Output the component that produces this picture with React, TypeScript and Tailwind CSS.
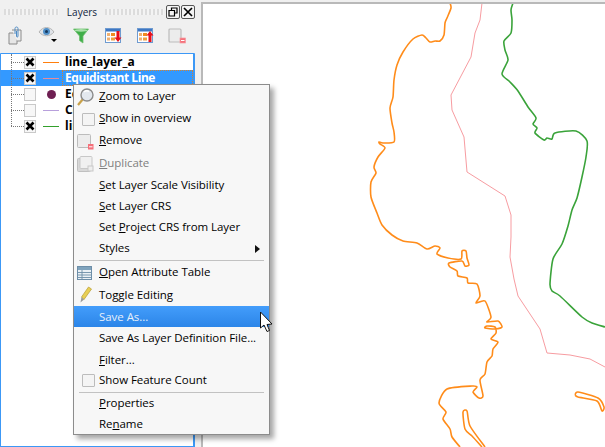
import React from "react";

const orange1 = "450,3 451,8 447,18 445,23 444,35 440,41 435,41 430,42 426,38 422,35 413,39 403,52 397,65 394,80 393,97 390,108 392,123 394,132 394,142 383,143 379,142 380,144 385,148 378,157 374,167 376,173 371,182 371,197 377,213 382,225 392,235 403,241 417,243 427,249 435,246 440,248 437,254 448,258 461,259 462,251 466,251 467,258 469,265 465,266 462,261 449,263 450,267 457,271 458,276 467,278 468,283 477,284 480,296 476,303 485,301 491,317 487,322 498,321 502,327 495,329 485,328 487,326 495,327 496,333 491,339 498,342 493,349 492,356 487,362 485,374 480,380 483,396 479,398 473,392 477,387 472,386 447,389 439,403 446,412 443,419 450,429 452,437 460,447";
const orange2 = "485,447 470,426 467,411 463,412 465,429 472,436 482,447";
const orange3 = "575,395 578,392 598,398 604,407 602,411 597,401 578,397 575,395";
const pink = "482,3 480,20 475,33 471,57 451,95 452,110 464,137 467,172 505,196 511,215 511,237 510,257 514,279 518,296 540,329 547,353 570,355 590,359 605,367";
const green = "513,3 511,10 512,20 511,33 504,41 505,50 508,60 502,74 510,82 518,91 528,107 536,118 533,124 537,128 535,133 544,140 547,138 552,139 555,133 576,131 587,141 586,157 582,177 577,198 572,210 568,226 562,244 553,259 550,284 552,291 560,296 582,317 592,323 605,327";

function smooth(points: string): string {
  const p = points.split(" ").map((s) => s.split(",").map(Number));
  let d = `M${p[0][0]} ${p[0][1]}`;
  const k = 0.12;
  for (let i = 0; i < p.length - 1; i++) {
    const a = p[Math.max(i - 1, 0)];
    const b = p[i];
    const c = p[i + 1];
    const e = p[Math.min(i + 2, p.length - 1)];
    d += ` C${b[0] + (c[0] - a[0]) * k} ${b[1] + (c[1] - a[1]) * k} ${c[0] - (e[0] - b[0]) * k} ${c[1] - (e[1] - b[1]) * k} ${c[0]} ${c[1]}`;
  }
  return d;
}

function Grip({ className }: { className: string }) {
  return <div className={`h-[6px] bg-[repeating-linear-gradient(90deg,#dcdcdc_0_2px,#f4f4f4_2px_4px)] ${className}`} />;
}

function Check({ on }: { on: boolean }) {
  return (
    <div className="w-[12px] h-[13px] border border-[#c9c9c9] bg-[#f7f7f7] flex items-center justify-center">
      {on && (
        <svg width="10" height="10" viewBox="0 0 10 10">
          <path d="M1.5 1.5 L8.5 8.5 M8.5 1.5 L1.5 8.5" stroke="#000" strokeWidth="2.6" />
        </svg>
      )}
    </div>
  );
}

function TreeRow({ on, symbol, label, selected }: { on: boolean; symbol: React.ReactNode; label: string; selected?: boolean }) {
  return (
    <div className={`h-[16px] flex items-center shrink-0 ${selected ? "bg-[#3399ff]" : ""}`}>
      <div className="w-[10px] h-full" />
      <div className="w-[13px] border-t border-dotted border-[#777]" />
      <Check on={on} />
      <div className="w-[7px]" />
      <div className="w-[16px] flex justify-center items-center">{symbol}</div>
      <div className={`ml-[3px] h-full flex-1 flex items-center pl-[3px] font-bold text-[12px] ${selected ? "text-white tracking-[-0.45px] outline-1 outline-dotted outline-offset-[-1px] outline-[#d9822b]" : "text-black"}`}>
        {label}
      </div>
    </div>
  );
}

function LineSym({ color }: { color: string }) {
  return <div className="w-[16px] h-px" style={{ backgroundColor: color }} />;
}

function BoxIcon() {
  return <div className="ml-[8px] w-[13px] h-[13px] rounded-[1px] border border-[#bcbcbc] bg-[#f4f4f4]" />;
}

function MenuRow({ h, children, icon, active, disabled, arrow, shift }: { h: string; children: React.ReactNode; icon?: React.ReactNode; active?: boolean; disabled?: boolean; arrow?: boolean; shift?: string }) {
  return (
    <div className={`${h} flex items-center shrink-0 ${active ? "bg-gradient-to-b from-[#439dfb] to-[#2b85e8] text-[#e6effa]" : disabled ? "text-[#808080]" : "text-black"}`}>
      <div className="w-[25px] flex items-center shrink-0">{icon}</div>
      <div className={`flex-1 whitespace-nowrap ${shift ?? ""}`}>{children}</div>
      {arrow && (
        <svg width="5" height="8" viewBox="0 0 5 8" className="mr-[9px]">
          <path d="M0 0 L5 4 L0 8 Z" fill="#111" />
        </svg>
      )}
    </div>
  );
}

function Sep({ h }: { h: string }) {
  return (
    <div className={`${h} flex items-center px-[5px] shrink-0`}>
      <div className="w-full h-px bg-[#c2c2c2]" />
    </div>
  );
}

function TableIcon({ up }: { up: boolean }) {
  return (
    <svg width="17" height="16" viewBox="0 0 17 16">
      <rect x="0.5" y="0.5" width="15" height="14" fill="#fff" stroke="#6f9bd0" />
      <rect x="1" y="1" width="14" height="2.5" fill="#3f78c4" />
      <rect x="2" y="5" width="3" height="3" fill="#f0b070" />
      <rect x="2" y="9.5" width="3" height="3" fill="#f0b070" />
      <rect x="6" y="5" width="4" height="3" fill="#f08a20" />
      <rect x="6" y="9.5" width="4" height="3" fill="#f0a040" />
      {up ? <path d="M13 3 L16.5 7.5 L14.5 7.5 L14.5 14 L11.5 14 L11.5 7.5 L9.5 7.5 Z" fill="#e8101a" /> : <path d="M13 14 L16.5 9.5 L14.5 9.5 L14.5 3 L11.5 3 L11.5 9.5 L9.5 9.5 Z" fill="#e8101a" />}
    </svg>
  );
}

export default function App() {
  return (
    <div className="relative w-[605px] h-[447px] overflow-hidden flex bg-[#f0f0f0] font-['Open_Sans',sans-serif] text-[12px] text-black">
      {/* Layers panel */}
      <div className="w-[195px] h-full flex flex-col shrink-0">
        <div className="h-[20px] flex items-center pt-[4px] shrink-0">
          <Grip className="w-[55px] ml-[4px]" />
          <div className="w-[46px] text-center text-[10px] text-[#10243c]">Layers</div>
          <Grip className="w-[59px]" />
          <div className="ml-[2px] flex gap-[1px]">
            <div className="w-[14px] h-[14px] rounded-[2px] border border-[#555] flex items-center justify-center bg-[#f4f4f4]">
              <svg width="10" height="10" viewBox="0 0 10 10">
                <path d="M3.5 3 V1 H9 V6 H7 M1 3.5 H6.5 V9 H1 Z" fill="none" stroke="#000" strokeWidth="1.2" />
              </svg>
            </div>
            <div className="w-[14px] h-[14px] rounded-[2px] border border-[#555] flex items-center justify-center bg-[#f4f4f4]">
              <svg width="10" height="10" viewBox="0 0 10 10">
                <path d="M1 1 L9 9 M9 1 L1 9" stroke="#000" strokeWidth="1.7" />
              </svg>
            </div>
          </div>
        </div>
        <div className="h-[33px] flex items-center shrink-0 pb-[2px]">
          <div className="w-[32px] flex justify-center">
            <svg width="16" height="19" viewBox="0 0 16 19">
              <path d="M1 7 H9 V18 H1 Z" fill="#e6e6e6" stroke="#8a8a8a" />
              <path d="M4 4 H13 V15 H9" fill="#efefef" stroke="#8a8a8a" />
              <path d="M7 8 V2.5 C7 0.5 10 0.5 10 2.5 V10 C10 11.5 8.5 11.5 8.5 10 V5" fill="none" stroke="#4f8bc4" strokeWidth="1" />
            </svg>
          </div>
          <div className="w-[33px] flex justify-center relative">
            <svg width="22" height="20" viewBox="0 0 22 20">
              <path d="M1 6 C5 0 12 0 16 6 C12 11 5 11 1 6 Z" fill="#dfe3e8" stroke="#b5b5b5" />
              <circle cx="8.5" cy="5.5" r="3.5" fill="#4f8fc8" />
              <circle cx="8.5" cy="5.5" r="1.5" fill="#17385c" />
              <path d="M13 13 H19 L16 16 Z" fill="#000" />
            </svg>
          </div>
          <div className="w-[32px] flex justify-center">
            <svg width="16" height="16" viewBox="0 0 16 16">
              <path d="M0.5 1 H15.5 L10 8 V15 L6.5 12.5 V8 Z" fill="#3fae49" stroke="#6fbf6f" strokeWidth="0.8" />
              <ellipse cx="8" cy="2.4" rx="6.5" ry="1.3" fill="#a8e0a8" />
            </svg>
          </div>
          <div className="w-[32px] flex justify-center"><TableIcon up={false} /></div>
          <div className="w-[32px] flex justify-center"><TableIcon up={true} /></div>
          <div className="w-[32px] flex justify-center">
            <svg width="18" height="16" viewBox="0 0 18 16">
              <rect x="1" y="1" width="12" height="13" rx="1" fill="#ececec" stroke="#bcbcbc" strokeWidth="1.2" />
              <rect x="12" y="10" width="5.5" height="5" fill="#f5707a" stroke="#f59aa0" strokeWidth="0.7" />
              <rect x="13" y="12" width="3.5" height="1" fill="#fff" />
            </svg>
          </div>
        </div>
        <div className="relative flex-1 bg-white border border-[#3c98f6] border-r-2 rounded-t-[1px] flex flex-col">
          <TreeRow on symbol={<LineSym color="#ff7f0e" />} label="line_layer_a" />
          <TreeRow on selected symbol={<LineSym color="#e88a9a" />} label="Equidistant Line" />
          <TreeRow on={false} symbol={<div className="w-[9px] h-[9px] rounded-full bg-[#6e1f52]" />} label="Ec" />
          <TreeRow on={false} symbol={<LineSym color="#b8a0dc" />} label="Cc" />
          <TreeRow on symbol={<LineSym color="#33a02c" />} label="lin" />
          <div className="absolute left-[10px] top-0 h-[72px] border-l border-dotted border-[#777]" />
        </div>
      </div>

      {/* Map canvas */}
      <div className="flex-1 pl-[6px] pt-[2px] h-full">
        <div className="w-full h-full bg-white border-t-2 border-l-2 border-[#b9b9b9]">
          <svg viewBox="203 4 402 443" className="block w-full h-full" fill="none" strokeLinejoin="round">
            <path d={smooth(orange1)} stroke="#ff8c1a" strokeWidth="1.6" />
            <path d={smooth(orange2)} stroke="#ff8c1a" strokeWidth="1.6" />
            <path d={smooth(orange3)} stroke="#ff8c1a" strokeWidth="1.6" />
            <polyline points={pink} stroke="#f79ca1" strokeWidth="1" />
            <path d={smooth(green)} stroke="#3aa33a" strokeWidth="1.6" />
          </svg>
        </div>
      </div>

      {/* Context menu */}
      <div className="absolute left-[73px] top-[84px] w-[197px] h-[351px] border border-[#8c8c8c] bg-[#f7f7f7] shadow-[4px_4px_5px_rgba(0,0,0,0.35)] pt-px flex flex-col text-[11.5px] tracking-[-0.05px]">
        <MenuRow h="h-[22px]" shift="pb-[2px]" icon={
          <svg width="20" height="20" viewBox="0 0 20 20" className="ml-[2px]">
            <path d="M2 18 L7 12" stroke="#c9a24a" strokeWidth="2.2" />
            <circle cx="11" cy="8" r="6" fill="#e3e8ee" stroke="#8b8b8b" strokeWidth="1.4" />
            <path d="M8 5 A4 4 0 0 1 13 4.5" stroke="#fff" strokeWidth="1.4" fill="none" />
          </svg>
        }><u>Z</u>oom to Layer</MenuRow>
        <MenuRow h="h-[22px]" shift="pb-[2px]" icon={<BoxIcon />}><u>S</u>how in overview</MenuRow>
        <MenuRow h="h-[23px]" shift="pb-[4px]" icon={
          <svg width="17" height="16" viewBox="0 0 17 16" className="ml-[3px]">
            <rect x="0.5" y="0.5" width="13" height="13" rx="1" fill="#ececec" stroke="#bcbcbc" />
            <rect x="11" y="10" width="5.5" height="5.5" fill="#f5707a" />
            <rect x="12" y="12.3" width="3.5" height="1" fill="#fff" />
          </svg>
        }><u>R</u>emove</MenuRow>
        <MenuRow h="h-[22px]" shift="pb-[2px]" disabled icon={
          <svg width="17" height="16" viewBox="0 0 17 16" className="ml-[3px]">
            <rect x="0.5" y="2.5" width="13" height="13" rx="1" fill="#d8d8d8" stroke="#c0c0c0" />
            <rect x="3" y="0.5" width="12" height="12" rx="1" fill="#f0f0f0" stroke="#c8c8c8" />
            <rect x="11" y="10" width="5" height="5" fill="#eeeeee" stroke="#c8c8c8" />
          </svg>
        }><u>D</u>uplicate</MenuRow>
        <MenuRow h="h-[21px]" shift="pb-[2px]"><u>S</u>et Layer Scale Visibility</MenuRow>
        <MenuRow h="h-[21px]" shift="pb-[2px]"><u>S</u>et Layer CRS</MenuRow>
        <MenuRow h="h-[21px]" shift="pb-[2px]"><span>Set <u>P</u>roject CRS from Layer</span></MenuRow>
        <MenuRow h="h-[21px]" shift="pb-[2px]" arrow>Styles</MenuRow>
        <Sep h="h-[2px]" />
        <MenuRow h="h-[23px]" shift="pb-[2px]" icon={
          <svg width="15" height="14" viewBox="0 0 15 14" className="ml-[3px]">
            <rect x="0.5" y="0.5" width="14" height="13" fill="#eaf0f5" stroke="#6d8ea8" />
            <rect x="1" y="1" width="13" height="3" fill="#7fa3bd" />
            <path d="M1 6.5 H14 M1 9 H14 M1 11.5 H14 M5 4 V13" stroke="#6d8ea8" strokeWidth="0.9" />
          </svg>
        }><u>O</u>pen Attribute Table</MenuRow>
        <MenuRow h="h-[22px]" icon={
          <svg width="14" height="18" viewBox="0 0 14 18" className="ml-[5px]">
            <path d="M2.5 11 L9.5 1 L12.5 3 L5 13.5 Z" fill="#e8cf55" stroke="#b89c30" strokeWidth="0.7" />
            <path d="M2.5 11 L5 13.5 L1.5 16.5 Z" fill="#9a9a9a" />
          </svg>
        }>Toggle Editing</MenuRow>
        <MenuRow h="h-[21px]" active>Save As...</MenuRow>
        <MenuRow h="h-[22px]">Save As Layer Definition File...</MenuRow>
        <MenuRow h="h-[21px]"><u>F</u>ilter...</MenuRow>
        <MenuRow h="h-[21px]" shift="pb-[2px]" icon={<BoxIcon />}>Show Feature Count</MenuRow>
        <Sep h="h-[2px]" />
        <MenuRow h="h-[21px]" shift="pb-[2px]"><u>P</u>roperties</MenuRow>
        <MenuRow h="h-[21px]" shift="pb-[2px]">Re<u>n</u>ame</MenuRow>
      </div>

      {/* Mouse pointer */}
      <svg width="16" height="22" viewBox="0 0 16 22" className="absolute left-[259px] top-[311px]">
        <path d="M1.5 1 V17 L5 14 L8 20.5 L10.5 19.5 L8 13.5 L13 13 Z" fill="#fff" stroke="#111" strokeWidth="1" />
      </svg>
    </div>
  );
}
